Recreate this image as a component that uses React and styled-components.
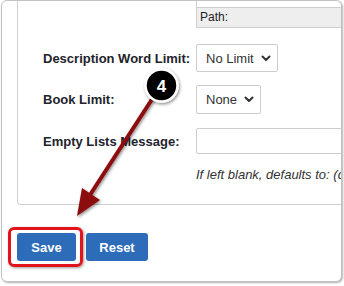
import React from "react";
import styled, { createGlobalStyle } from "styled-components";

const Global = createGlobalStyle`
  html, body { margin: 0; padding: 0; background: #fff; }
  body { font-family: "Liberation Sans", Arial, sans-serif; width: 344px; height: 286px; overflow: hidden; }
`;

const Chevron = () => (
  <svg width="10" height="7" viewBox="0 0 10 7">
    <path d="M1.5 1.5 L5 5 L8.5 1.5" fill="none" stroke="#333" strokeWidth="2" strokeLinecap="round" strokeLinejoin="round" />
  </svg>
);

const App = () => {
  return (
    <>
      <Global />
      <Page>
        <Frame>
          <Panel>
            <PathTop />
            <PathBox>Path:</PathBox>
            <Row gap={16}>
              <Label>Description Word Limit:</Label>
              <Select width={82} height={28}>
                No Limit
                <Chevron />
              </Select>
            </Row>
            <Row gap={13}>
              <Label>Book Limit:</Label>
              <Select width={65} height={29}>
                None
                <Chevron />
              </Select>
            </Row>
            <Row gap={14}>
              <Label>Empty Lists Message:</Label>
              <Input />
            </Row>
            <Hint>If left blank, defaults to: (default)</Hint>
          </Panel>
          <ButtonRow>
            <Highlight>
              <Button width={59}>Save</Button>
            </Highlight>
            <Button width={62}>Reset</Button>
          </ButtonRow>
        </Frame>
        <Annotation width="344" height="286" viewBox="0 0 344 286">
          <defs>
            <filter id="sh" x="-30%" y="-30%" width="160%" height="160%">
              <feDropShadow dx="1" dy="1.5" stdDeviation="1.5" floodColor="#000" floodOpacity="0.45" />
            </filter>
          </defs>
          <g filter="url(#sh)">
            <line x1="158" y1="90" x2="88" y2="198" stroke="#8b0b0b" strokeWidth="4" />
            <polygon points="77,216 100,200 82,188" fill="#8b0b0b" />
          </g>
          <g filter="url(#sh)">
            <circle cx="161.5" cy="85.5" r="16" fill="#000" stroke="#fff" strokeWidth="2.5" />
          </g>
          <text x="161.5" y="91.5" textAnchor="middle" fill="#fff" fontFamily="Liberation Sans, Arial, sans-serif" fontWeight="700" fontSize="17">4</text>
        </Annotation>
      </Page>
    </>
  );
};

export default App;

const Page = styled.div`
  position: relative;
  width: 344px;
  height: 286px;
`;

const Frame = styled.div`
  margin-left: 1px;
  width: 341px;
  height: 282px;
  box-sizing: border-box;
  border: 1px solid #c2c2c2;
  border-radius: 6px;
  box-shadow: 1px 1px 2px rgba(0, 0, 0, 0.3);
  overflow: hidden;
  background: #fff;
`;

const Panel = styled.div`
  margin-left: 15px;
  width: 360px;
  height: 204px;
  box-sizing: border-box;
  border-left: 1px solid #d0d0d0;
  border-bottom: 1px solid #d0d0d0;
  border-bottom-left-radius: 4px;
  padding-left: 178px;
`;

const PathTop = styled.div`
  height: 6px;
  border-left: 1px solid #cfcfcf;
`;

const PathBox = styled.div`
  height: 21px;
  box-sizing: border-box;
  border: 1px solid #cfcfcf;
  background: #eeeeee;
  padding-left: 3px;
  font-size: 12px;
  line-height: 19px;
  color: #222;
`;

const Row = styled.div`
  display: flex;
  align-items: center;
  margin-top: ${({ gap }) => gap}px;
  margin-left: -153px;
`;

const Label = styled.div`
  width: 153px;
  flex: none;
  font-size: 13px;
  font-weight: 700;
  color: #22232b;
  white-space: nowrap;
`;

const Select = styled.div`
  display: flex;
  align-items: center;
  justify-content: space-between;
  width: ${({ width }) => width}px;
  height: ${({ height }) => height}px;
  box-sizing: border-box;
  border: 1px solid #cccccc;
  border-radius: 2px;
  padding: 0 6px 0 9px;
  font-size: 13px;
  color: #333;
`;

const Input = styled.div`
  width: 170px;
  height: 26px;
  box-sizing: border-box;
  border: 1px solid #cccccc;
  border-radius: 2px;
`;

const Hint = styled.div`
  margin-top: 13px;
  font-size: 13px;
  font-style: italic;
  line-height: 16px;
  color: #333;
  white-space: nowrap;
`;

const ButtonRow = styled.div`
  display: flex;
  align-items: center;
  margin-top: 22px;
  padding-left: 6px;
  gap: 3px;
`;

const Highlight = styled.div`
  padding: 3px 4px 3px 6px;
  border: 3px solid #e3131b;
  border-radius: 6px;
  box-shadow: 1px 1px 3px rgba(0, 0, 0, 0.4);
`;

const Button = styled.div`
  width: ${({ width }) => width}px;
  height: 28px;
  display: flex;
  align-items: center;
  justify-content: center;
  background: #2c6cb8;
  border-radius: 3px;
  color: #fff;
  font-size: 13px;
  font-weight: 700;
`;

const Annotation = styled.svg`
  position: absolute;
  top: 0;
  left: 0;
  pointer-events: none;
`;
